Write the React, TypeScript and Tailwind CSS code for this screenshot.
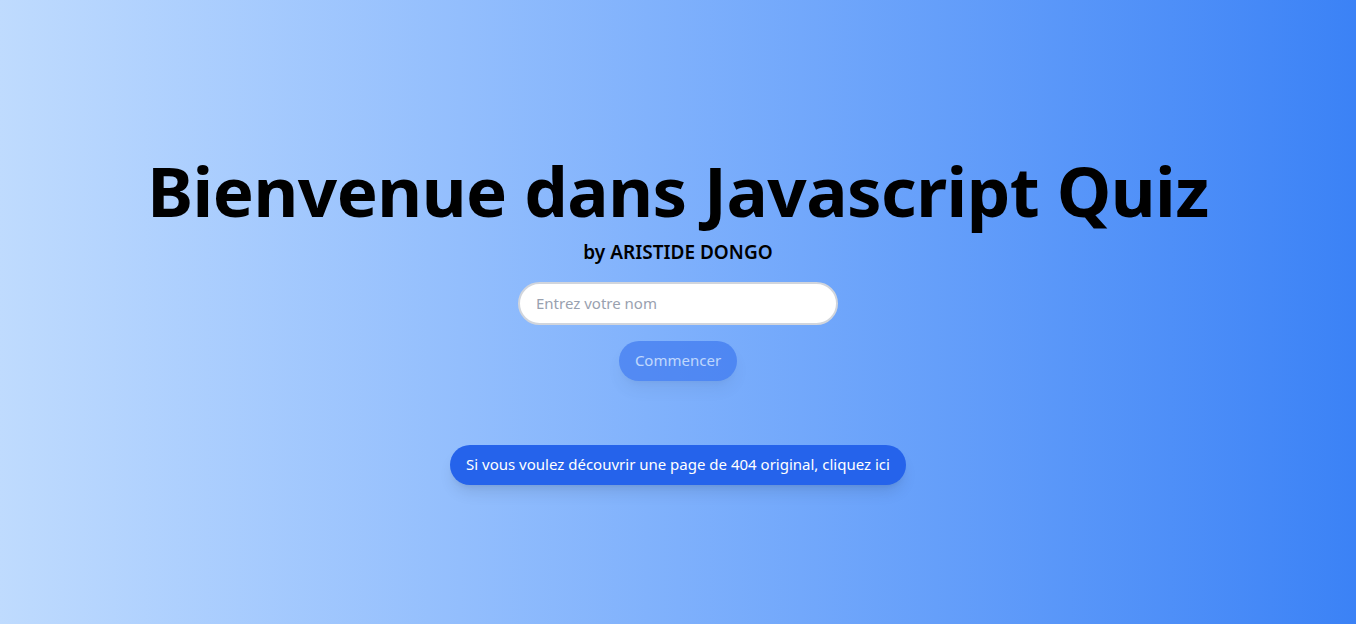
export default function App() {
  return (
    <div
      className="min-h-screen w-full flex flex-col items-center justify-center pt-[10px] bg-gradient-to-r from-[#bfdbfe] to-[#3b82f6]"
      style={{ fontFamily: '"Noto Sans", "Open Sans", sans-serif' }}
    >
      <h1 className="text-[69px] leading-[80px] font-bold text-black tracking-[-0.5px]">
        Bienvenue dans Javascript Quiz
      </h1>
      <p className="text-[19px] leading-[28px] font-semibold text-black mt-[8px]">by ARISTIDE DONGO</p>
      <input
        type="text"
        placeholder="Entrez votre nom"
        className="mt-4 w-80 h-[43px] rounded-full border-2 border-gray-300 bg-white px-4 text-[15px] text-black placeholder:text-gray-400 outline-none"
      />
      <button
        disabled
        className="mt-4 h-10 px-4 rounded-full bg-[#2563eb] opacity-50 text-white text-[15px] shadow-lg"
      >
        Commencer
      </button>
      <button className="mt-16 h-10 px-4 rounded-full bg-[#2563eb] text-white text-[15px] shadow-lg">
        Si vous voulez découvrir une page de 404 original, cliquez ici
      </button>
    </div>
  );
}
